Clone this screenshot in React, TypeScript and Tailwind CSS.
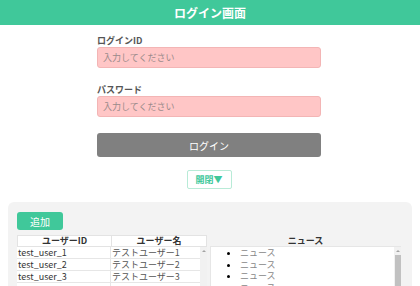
import React from "react";

const font = { fontFamily: '"Noto Sans CJK JP", "Noto Sans", sans-serif' };

function VScroll({ thumb }: { thumb?: boolean }) {
  return (
    <div className="w-[7px] shrink-0 bg-[#f1f1f1] flex flex-col items-center">
      <div className="h-[8px] flex items-center justify-center">
        <div className="w-0 h-0 border-l-[2px] border-r-[2px] border-b-[2px] border-l-transparent border-r-transparent border-b-[#a3a3a3]" />
      </div>
      {thumb && <div className="w-[6px] flex-1 bg-[#c1c1c1]" />}
    </div>
  );
}

export default function App() {
  const users = [
    ["test_user_1", "テストユーザー1"],
    ["test_user_2", "テストユーザー2"],
    ["test_user_3", "テストユーザー3"],
    ["", ""],
  ];
  return (
    <div style={font} className="w-[420px] h-[286px] overflow-hidden bg-white text-[#333]">
      <div className="h-[25px] bg-[#40c89a] flex items-center justify-center text-white font-bold text-[12px]">
        ログイン画面
      </div>
      <div className="w-[224px] ml-[97px]">
        <div className="mt-[10px] h-[12px] leading-[12px] text-[9px] font-bold text-[#555]">ログインID</div>
        <div className="h-[21px] rounded-[3px] bg-[#ffc6c6] border border-[#f3b5b5] flex items-center pl-[5px] text-[9px] text-[#9a8a8a]">
          入力してください
        </div>
        <div className="mt-[16px] h-[12px] leading-[12px] text-[9px] font-bold text-[#555]">パスワード</div>
        <div className="h-[21px] rounded-[3px] bg-[#ffc6c6] border border-[#f3b5b5] flex items-center pl-[5px] text-[9px] text-[#9a8a8a]">
          入力してください
        </div>
        <div className="mt-[16px] h-[24px] rounded-[3px] bg-[#808080] flex items-center justify-center text-white text-[10px]">
          ログイン
        </div>
        <div className="mt-[13px] flex justify-center">
          <div className="w-[45px] h-[19px] border border-[#b8ebd7] rounded-[2px] bg-white flex items-center justify-center text-[9px] text-[#40c89a] font-bold">
            開閉▼
          </div>
        </div>
      </div>
      <div className="mt-[13px] mx-[8px] h-[100px] rounded-[6px] bg-[#f3f3f3] pt-[10px] pl-[9px] pr-[9px]">
        <div className="w-[46px] h-[18px] rounded-[3px] bg-[#40c89a] flex items-center justify-center text-white text-[10px]">
          追加
        </div>
        <div className="mt-[5px] flex gap-[3px]">
          <div className="w-[190px] shrink-0">
            <div className="flex h-[12px] items-center bg-white border border-[#e3e3e3] text-[9px] font-bold leading-[10px]">
              <div className="w-[94px] text-center border-r border-[#e3e3e3]">ユーザーID</div>
              <div className="flex-1 text-center">ユーザー名</div>
            </div>
            <div className="flex">
              <div className="w-[183px]">
                {users.map((u, i) => (
                  <div key={i} className="flex h-[12px] bg-white border-b border-[#e6e6e6] text-[9px] leading-[11px]">
                    <div className="w-[94px] pl-[1px] border-r border-[#e6e6e6]">{u[0]}</div>
                    <div className="flex-1 pl-[1px] text-[#555]">{u[1]}</div>
                  </div>
                ))}
              </div>
              <VScroll />
            </div>
          </div>
          <div className="w-[191px] shrink-0">
            <div className="h-[11px] text-center text-[9px] font-bold leading-[11px]">ニュース</div>
            <div className="flex bg-white border-t border-l border-[#e6e6e6] h-[60px]">
              <ul className="flex-1 list-disc pl-[29px] pt-0 text-[9px] text-[#888] leading-[11.5px] marker:text-black">
                <li>ニュース</li>
                <li>ニュース</li>
                <li>ニュース</li>
                <li>ニュース</li>
              </ul>
              <VScroll thumb />
            </div>
          </div>
        </div>
      </div>
    </div>
  );
}
